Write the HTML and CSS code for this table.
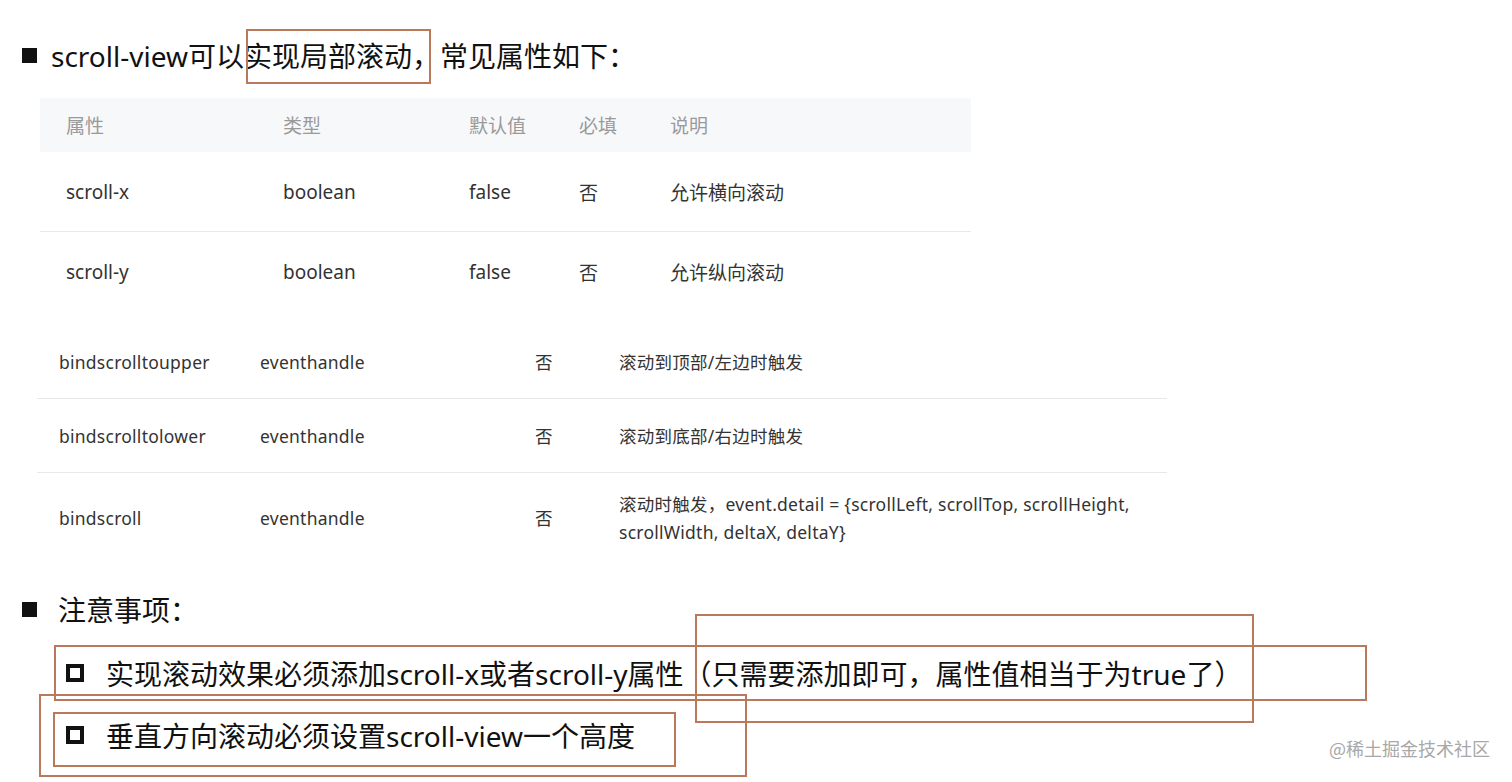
FILE: index.html
```html
<!DOCTYPE html>
<html lang="zh-CN">
<head>
<meta charset="utf-8">
<title>scroll-view</title>
<link rel="stylesheet" href="styles.css">
</head>
<body>
<div class="page">
  <div class="heading h-first">
    <span class="sq"></span>
    <span class="htext">scroll-view可以实现局部滚动，常见属性如下：</span>
  </div>

  <div class="table1">
    <div class="t1-row t1-head">
      <span>属性</span><span>类型</span><span>默认值</span><span>必填</span><span>说明</span>
    </div>
    <div class="t1-row t1-body t1-line">
      <span>scroll-x</span><span>boolean</span><span>false</span><span>否</span><span>允许横向滚动</span>
    </div>
    <div class="t1-row t1-body">
      <span>scroll-y</span><span>boolean</span><span>false</span><span>否</span><span>允许纵向滚动</span>
    </div>
  </div>

  <div class="table2">
    <div class="t2-row t2-line">
      <span>bindscrolltoupper</span><span>eventhandle</span><span>否</span><span>滚动到顶部/左边时触发</span>
    </div>
    <div class="t2-row t2-line">
      <span>bindscrolltolower</span><span>eventhandle</span><span>否</span><span>滚动到底部/右边时触发</span>
    </div>
    <div class="t2-row t2-tall">
      <span>bindscroll</span><span>eventhandle</span><span>否</span><span>滚动时触发，event.detail = {scrollLeft, scrollTop, scrollHeight,<br>scrollWidth, deltaX, deltaY}</span>
    </div>
  </div>

  <div class="heading h-second">
    <span class="sq"></span>
    <span class="htext htext2">注意事项：</span>
  </div>

  <div class="items">
    <div class="item"><span class="hsq"></span><span class="itext">实现滚动效果必须添加scroll-x或者scroll-y属性（只需要添加即可，属性值相当于为true了）</span></div>
    <div class="item"><span class="hsq"></span><span class="itext">垂直方向滚动必须设置scroll-view一个高度</span></div>
  </div>

  <div class="mark mark-top"></div>
  <div class="mark mark-a"></div>
  <div class="mark mark-b"></div>
  <div class="mark mark-c"></div>
  <div class="mark mark-d"></div>

  <div class="watermark">@稀土掘金技术社区</div>
</div>
</body>
</html>
```

FILE: styles.css
```css
html, body {
  margin: 0;
  padding: 0;
  background: #ffffff;
}

.page {
  position: relative;
  width: 1512px;
  height: 782px;
  overflow: hidden;
  font-family: "Noto Sans", "Noto Sans CJK SC", sans-serif;
  color: #1a1a1a;
}

.heading {
  display: flex;
  align-items: center;
  height: 40px;
  padding-left: 22px;
  font-size: 28px;
  color: #111;
}

.h-first {
  margin-top: 35px;
}

.h-second {
  margin-top: 26px;
}

.sq {
  width: 15px;
  height: 15px;
  background: #111;
  flex: none;
}

.htext {
  margin-left: 14px;
}

.htext2 {
  margin-left: 21px;
}

/* table 1 */
.table1 {
  margin-top: 23px;
  margin-left: 40px;
  width: 931px;
}

.t1-row {
  display: grid;
  grid-template-columns: 217px 186px 110px 91px 1fr;
  align-items: center;
  padding-left: 26px;
  font-size: 19px;
}

.t1-head {
  height: 54px;
  background: #f7f8fa;
  color: #9a9a9a;
}

.t1-body {
  height: 80px;
  color: #333;
}

.t1-line {
  border-bottom: 1px solid #e8e8e8;
  height: 79px;
}

/* table 2 */
.table2 {
  margin-top: 13px;
  margin-left: 37px;
  width: 1130px;
}

.t2-row {
  display: grid;
  grid-template-columns: 201px 275px 84px 1fr;
  align-items: center;
  padding-left: 22px;
  height: 74px;
  font-size: 17.5px;
  letter-spacing: 0.25px;
  color: #333;
  line-height: 28px;
}

.t2-line {
  border-bottom: 1px solid #e8e8e8;
  height: 73px;
}

.t2-tall {
  height: 90px;
}

/* notes */
.items {
  margin-top: 24px;
  display: flex;
  flex-direction: column;
  gap: 22px;
}

.item {
  display: flex;
  align-items: center;
  height: 40px;
  padding-left: 66px;
  font-size: 28px;
  color: #111;
}

.hsq {
  width: 10px;
  height: 10px;
  border: 4px solid #111;
  flex: none;
}

.itext {
  margin-left: 22px;
}

/* annotation boxes */
.mark {
  position: absolute;
  border: 2px solid #b9795a;
  box-sizing: border-box;
}

.mark-top {
  left: 246px;
  top: 29px;
  width: 185px;
  height: 55px;
}

.mark-a {
  left: 54px;
  top: 645px;
  width: 1313px;
  height: 56px;
}

.mark-b {
  left: 695px;
  top: 614px;
  width: 559px;
  height: 109px;
}

.mark-c {
  left: 39px;
  top: 694px;
  width: 708px;
  height: 83px;
}

.mark-d {
  left: 53px;
  top: 712px;
  width: 623px;
  height: 55px;
}

.watermark {
  position: absolute;
  right: 22px;
  top: 735px;
  font-family: "Noto Sans CJK SC", sans-serif;
  font-size: 18px;
  color: #a8a8a8;
}
```
